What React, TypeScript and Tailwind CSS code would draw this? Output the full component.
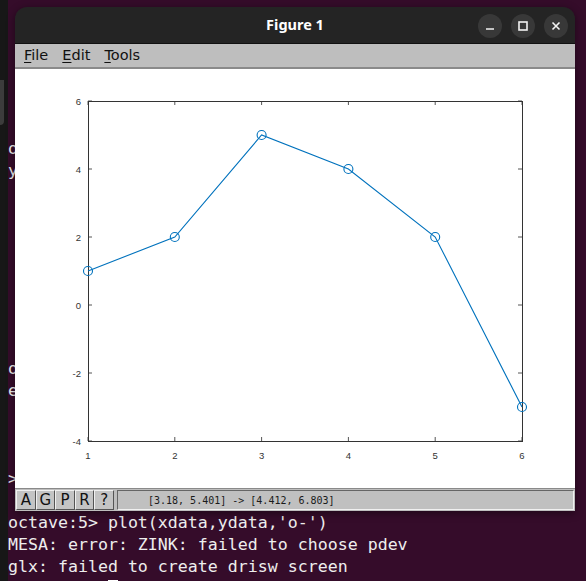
import React from "react";

const xs = [1, 2, 3, 4, 5, 6];
const ys = [1, 2, 5, 4, 2, -3];

// axes box inside the plot canvas (canvas origin = window left / menubar bottom)
const AX = { left: 73, right: 507, top: 32, bottom: 372 };
const px = (x: number) => AX.left + ((x - 1) / 5) * (AX.right - AX.left);
const py = (y: number) => AX.top + ((6 - y) / 10) * (AX.bottom - AX.top);

// terminal scrollback, mostly hidden behind the figure window
const termLines = [
  "",
  "",
  "",
  "",
  "",
  "",
  "",
  "octave:1> xdata = [1 2 3 4 5 6];",
  "ydata = [1 2 5 4 2 -3];",
  "",
  "",
  "",
  "",
  "",
  "",
  "",
  "",
  "octave:4> plot(xdata,ydata)",
  "error: plot: invalid input",
  "",
  "",
  "",
  ">> ",
  "",
  "octave:5> plot(xdata,ydata,'o-')",
  "MESA: error: ZINK: failed to choose pdev",
  "glx: failed to create drisw screen",
];

function Plot() {
  const pts = xs.map((x, i) => `${px(x)},${py(ys[i])}`).join(" ");
  const yTicks = [6, 4, 2, 0, -2, -4];
  return (
    <svg width={560} height={419} className="block">
      <rect x={0} y={0} width={560} height={419} fill="#ffffff" />
      {yTicks.map((t) => (
        <g key={`y${t}`}>
          <line x1={AX.left} x2={AX.left + 4} y1={py(t)} y2={py(t)} stroke="#555" />
          <line x1={AX.right - 4} x2={AX.right} y1={py(t)} y2={py(t)} stroke="#555" />
          <text
            x={AX.left - 7}
            y={py(t) + 3.5}
            textAnchor="end"
            fontSize={9.5}
            fill="#333"
            fontFamily="'Liberation Sans', Arial, sans-serif"
          >
            {t}
          </text>
        </g>
      ))}
      {xs.map((t) => (
        <g key={`x${t}`}>
          <line x1={px(t)} x2={px(t)} y1={AX.bottom - 4} y2={AX.bottom} stroke="#555" />
          <line x1={px(t)} x2={px(t)} y1={AX.top} y2={AX.top + 4} stroke="#555" />
          <text
            x={px(t)}
            y={AX.bottom + 18}
            textAnchor="middle"
            fontSize={9.5}
            fill="#333"
            fontFamily="'Liberation Sans', Arial, sans-serif"
          >
            {t}
          </text>
        </g>
      ))}
      <rect
        x={AX.left + 0.5}
        y={AX.top + 0.5}
        width={AX.right - AX.left}
        height={AX.bottom - AX.top}
        fill="none"
        stroke="#333"
        strokeWidth={1}
      />
      <polyline points={pts} fill="none" stroke="#0072bd" strokeWidth={1.1} />
      {xs.map((x, i) => (
        <circle key={i} cx={px(x)} cy={py(ys[i])} r={4.5} fill="none" stroke="#0072bd" strokeWidth={1.1} />
      ))}
    </svg>
  );
}

function TitleButton({ children }: { children: React.ReactNode }) {
  return (
    <div className="w-6 h-6 rounded-full bg-[#383838] flex items-center justify-center">
      <svg width={12} height={12} viewBox="0 0 12 12" fill="none" stroke="#f2f2f2" strokeWidth={1.6}>
        {children}
      </svg>
    </div>
  );
}

function Mnemonic({ first, rest }: { first: string; rest: string }) {
  return (
    <span>
      <span className="underline underline-offset-2 decoration-1">{first}</span>
      {rest}
    </span>
  );
}

function FigureWindow() {
  return (
    <div className="absolute left-[15px] top-[7px] w-[560px] flex flex-col rounded-t-[12px] overflow-hidden shadow-[0_2px_8px_rgba(0,0,0,0.45)]">
      <div className="h-[36px] bg-[#242424] relative flex items-center justify-center">
        <span className="text-white text-[14.5px] font-bold font-['Noto_Sans',sans-serif]">Figure 1</span>
        <div className="absolute right-[7px] top-[7px] flex gap-[9px]">
          <TitleButton>
            <line x1={2} y1={9} x2={10} y2={9} />
          </TitleButton>
          <TitleButton>
            <rect x={2} y={2} width={8} height={8} />
          </TitleButton>
          <TitleButton>
            <path d="M2.5 2.5 L9.5 9.5 M9.5 2.5 L2.5 9.5" />
          </TitleButton>
        </div>
      </div>
      <div className="h-[26px] bg-[#bebebe] border-t border-t-[#111] border-b-2 border-b-[#8a8a8a] flex items-center gap-[14px] pl-[9px] text-[14.5px] text-[#111] font-['DejaVu_Sans',sans-serif]">
        <Mnemonic first="F" rest="ile" />
        <Mnemonic first="E" rest="dit" />
        <Mnemonic first="T" rest="ools" />
      </div>
      <Plot />
      <div className="h-[23px] bg-[#bebebe] border-t border-t-[#8a8a8a] flex items-center px-[1px] gap-[3px]">
        <div className="flex">
          {["A", "G", "P", "R", "?"].map((b) => (
            <div
              key={b}
              className="w-[19.6px] h-[20px] border border-[#555] border-l-[#f0f0f0] border-t-[#f0f0f0] bg-[#c4c4c4] flex items-center justify-center text-[15px] text-[#111] font-['DejaVu_Sans',sans-serif]"
            >
              {b}
            </div>
          ))}
        </div>
        <div className="flex-1 h-[20px] border border-[#666] border-r-[#f0f0f0] border-b-[#f0f0f0] bg-[#c0c0c0] flex items-center pl-[30px] text-[10px] text-[#1a1a1a] font-['DejaVu_Sans_Mono',monospace]">
          [3.18, 5.401] -&gt; [4.412, 6.803]
        </div>
      </div>
    </div>
  );
}

export default function App() {
  return (
    <div className="relative w-[586px] h-[581px] overflow-hidden flex bg-[#350c2a]">
      <div className="w-[8px] shrink-0 bg-[#171717] pt-[80px]">
        <div className="w-[4px] h-[45px] bg-[#3c3c3c] rounded-br-[4px]" />
      </div>
      <div className="flex-1 -mt-[16px] text-[16.6px] leading-[22px] text-[#eeeeee] font-['DejaVu_Sans_Mono',monospace] whitespace-pre">
        {termLines.map((l, i) => (
          <div key={i} className="h-[22px]">
            {l}
          </div>
        ))}
        <div className="h-[22px] pl-[100px]">
          <span className="inline-block w-[10px] h-[19px] border border-white align-middle" />
        </div>
      </div>
      <FigureWindow />
    </div>
  );
}
